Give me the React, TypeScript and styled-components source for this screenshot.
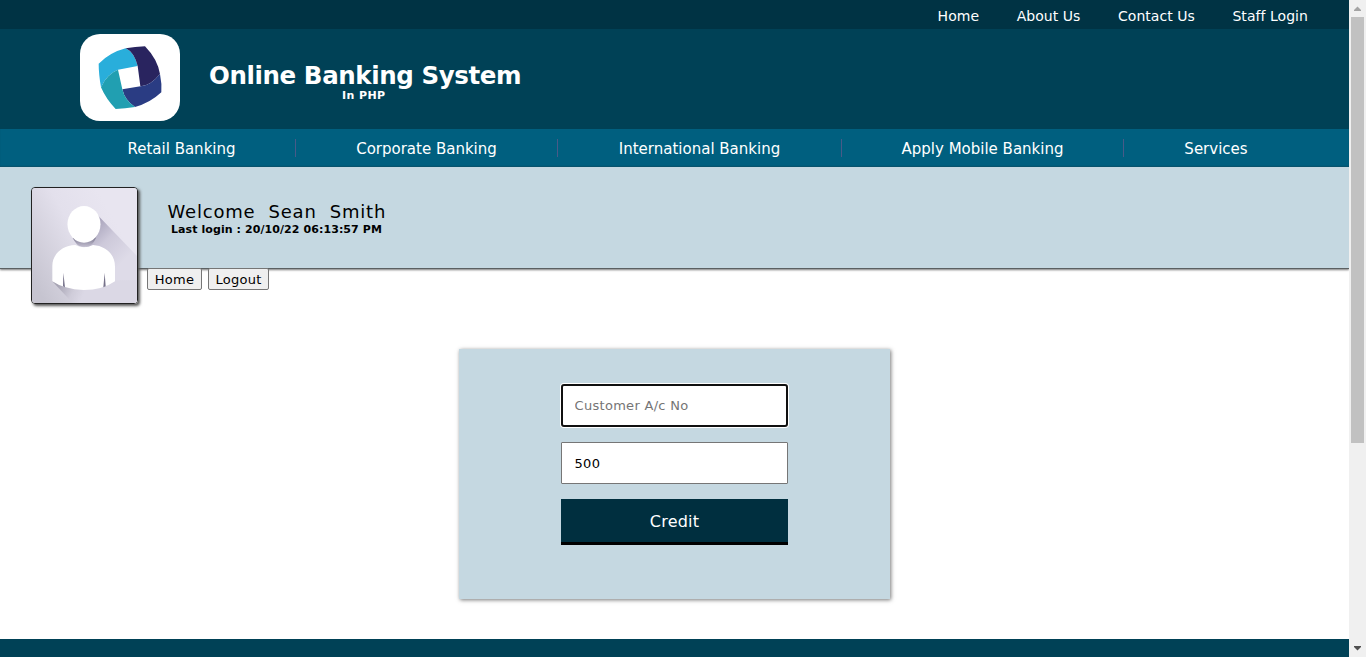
import React from 'react';
import styled, { createGlobalStyle } from 'styled-components';

const GlobalStyle = createGlobalStyle`
  * { box-sizing: border-box; }
  body { margin: 0; overflow: hidden; background: #fff; font-family: Verdana, 'DejaVu Sans', sans-serif; color: #000; }
`;

const Shell = styled.div`
  display: flex;
  height: 657px;
`;
const Page = styled.div`
  flex: 1;
  display: flex;
  flex-direction: column;
  min-width: 0;
`;
const TopBar = styled.nav`
  height: 29px;
  flex: none;
  background: #003344;
  display: flex;
  justify-content: flex-end;
  gap: 37.5px;
  padding: 2px 41px 0 0;
`;
const TopLink = styled.a`
  color: #fff;
  font-size: 14px;
  line-height: 28px;
  letter-spacing: 0.05px;
  white-space: nowrap;
`;
const Header = styled.header`
  height: 100px;
  flex: none;
  background: #004156;
  display: flex;
  padding: 5px 0 0 80px;
`;
const LogoTile = styled.div`
  width: 100px;
  height: 87px;
  border-radius: 20px;
  background: #fff;
  overflow: hidden;
`;
const Brand = styled.div`
  margin: 27px 0 0 29px;
  color: #fff;
  font-weight: bold;
`;
const BrandName = styled.div`
  font-size: 24.5px;
  line-height: 30px;
  letter-spacing: -0.4px;
  white-space: nowrap;
`;
const BrandNote = styled.div`
  font-size: 11px;
  line-height: 13px;
  letter-spacing: 0.4px;
  padding-left: 133px;
  margin-top: -2px;
`;
const MainNav = styled.nav`
  height: 38px;
  flex: none;
  background: #005f7f;
  box-shadow: inset 0 -1px 1px #00506c;
  display: flex;
  align-items: center;
  padding-left: 68px;
`;
const NavItem = styled.a<{ $width: number; $last?: boolean }>`
  width: ${(p) => p.$width}px;
  height: 18px;
  line-height: 20px;
  font-size: 15px;
  text-align: center;
  color: #fff;
  white-space: nowrap;
  border-right: ${(p) => (p.$last ? 'none' : '1px solid #485a88')};
`;
const UserBand = styled.section`
  height: 102px;
  flex: none;
  background: #c5d8e1;
  border-bottom: 1px solid #5b6062;
  box-shadow: 0 1px 2px #777;
  display: flex;
  padding: 20px 0 0 31px;
`;
const Avatar = styled.div`
  width: 107px;
  height: 117px;
  flex: none;
  border: 1px solid #222;
  border-radius: 4px;
  overflow: hidden;
  box-shadow: 2px 2px 3px #555;
  z-index: 1;
  svg { display: block; }
`;
const UserText = styled.div`
  padding: 14px 0 0 29.5px;
`;
const Welcome = styled.div`
  font-size: 18px;
  line-height: 22px;
  letter-spacing: 0.8px;
  white-space: pre;
`;
const LastLogin = styled.div`
  font-size: 11px;
  font-weight: bold;
  line-height: 13px;
  letter-spacing: 0.08px;
  padding-left: 3.5px;
`;
const Actions = styled.div`
  display: flex;
  gap: 6px;
  flex: none;
  height: 22px;
  margin: -1px 0 0 147px;
`;
const ActionButton = styled.button<{ $width: number }>`
  width: ${(p) => p.$width}px;
  height: 22px;
  padding: 1px 0 0;
  border: 1px solid #767676;
  border-radius: 2px;
  background: #efefef;
  font: 13px/20px Verdana, 'DejaVu Sans', sans-serif;
  letter-spacing: 0.25px;
  color: #000;
`;
const Card = styled.form`
  width: 431px;
  height: 250px;
  flex: none;
  margin: 59px 0 0 459px;
  padding: 35px 102px 0;
  background: #c5d8e1;
  box-shadow: 1px 1px 4px #777;
  display: flex;
  flex-direction: column;
`;
const Field = styled.input<{ $active?: boolean }>`
  width: 227px;
  height: ${(p) => (p.$active ? 43 : 42)}px;
  margin: 0 0 15px;
  padding: 0 ${(p) => (p.$active ? 11.5 : 12.5)}px;
  background: #fff;
  border: ${(p) => (p.$active ? '2px solid #101010' : '1px solid #767676')};
  border-radius: ${(p) => (p.$active ? 3 : 1)}px;
  box-shadow: ${(p) => (p.$active ? '0 0 0 1px #fff' : 'none')};
  outline: none;
  font: 13px Verdana, 'DejaVu Sans', sans-serif;
  letter-spacing: 0.3px;
  color: #000;
  &::placeholder { color: #757575; opacity: 1; }
`;
const Submit = styled.button`
  width: 227px;
  height: 46px;
  padding: 2px 0 0;
  border: 0;
  border-bottom: 3px solid #000;
  background: #002f3f;
  color: #fff;
  font: 16px Verdana, 'DejaVu Sans', sans-serif;
  letter-spacing: 0.2px;
`;
const Footer = styled.footer`
  height: 18px;
  flex: none;
  margin-top: auto;
  background: #004156;
`;
const ScrollTrack = styled.div`
  width: 17px;
  flex: none;
  background: #f0f0f0;
  display: flex;
  flex-direction: column;
  align-items: center;
`;
const ScrollThumb = styled.div`
  width: 13px;
  height: 426px;
  background: #c1c1c1;
  margin-bottom: auto;
`;
const ArrowIcon = styled.svg`
  flex: none;
`;

const Logo = () => (
  <svg width="100" height="87" viewBox="30 30 300 261">
    <path fill="#29aedb" d="M86 119Q120 85 167 73Q192 84 203 126L144 137Q110 150 93 190Q86 150 86 119Z" />
    <path fill="#29245f" d="M167 73Q195 68 225 67Q262 105 270 150Q243 183 216 186H211L203 126Q192 84 167 73Z" />
    <path fill="#2a3c83" d="M270 150Q276 180 274 205Q240 237 195 249Q165 230 157 196L216 186Q243 183 270 150Z" />
    <path fill="#219fb1" d="M93 190Q110 150 144 137L157 196Q165 230 195 249Q165 254 137 255Q108 225 93 190Z" />
  </svg>
);

const Portrait = () => (
  <svg width="105" height="115" viewBox="36 24 315 345">
    <defs>
      <linearGradient id="backdrop" x1="0" y1="0.8" x2="0.8" y2="0.3">
        <stop offset="0" stopColor="#c6c4d0" />
        <stop offset="0.6" stopColor="#e3e0ec" />
        <stop offset="1" stopColor="#e8e5f0" />
      </linearGradient>
      <linearGradient id="cast" gradientUnits="userSpaceOnUse" x1="215" y1="130" x2="320" y2="235">
        <stop offset="0" stopColor="#a5a0b9" />
        <stop offset="0.45" stopColor="#cdc9da" />
        <stop offset="1" stopColor="#dedbe8" />
      </linearGradient>
      <linearGradient id="castLow" gradientUnits="userSpaceOnUse" x1="115" y1="310" x2="190" y2="345">
        <stop offset="0" stopColor="#a6a3b3" />
        <stop offset="0.6" stopColor="#cfccd9" />
        <stop offset="1" stopColor="#dbd8e5" />
      </linearGradient>
      <linearGradient id="neck" x1="0" y1="0" x2="0" y2="1">
        <stop offset="0" stopColor="#77728b" />
        <stop offset="1" stopColor="#c4c0d1" />
      </linearGradient>
    </defs>
    <rect x="36" y="24" width="315" height="345" fill="url(#backdrop)" />
    <path d="M232 104L351 228V369H270V230L190 196Z" fill="url(#cast)" />
    <path d="M97 304L158 369H351V300Z" fill="url(#castLow)" />
    <path d="M158 174Q170 195 178 198Q192 204 210 197Q224 187 229 170Z" fill="url(#neck)" />
    <ellipse cx="192" cy="133" rx="49.5" ry="55" fill="#fff" />
    <path d="M97 304V258C97 224 124 197 166 195Q180 202 192 202Q205 202 219 195C259 198 285 224 285 260V304Q248 330 191 330Q132 328 97 304Z" fill="#fff" />
    <path d="M130 278L135 322L129 319ZM254 278L257 319L250 322Z" fill="#77738b" />
  </svg>
);

const Arrow = ({ down }: { down?: boolean }) => (
  <ArrowIcon width="17" height="17" viewBox="0 0 17 17">
    <path d={down ? 'M5 6h7v1L8.5 10.5L5 7Z' : 'M5 11h7v-1L8.5 6.5L5 10Z'} fill={down ? '#505050' : '#a3a3a3'} />
  </ArrowIcon>
);

const menu = [
  { label: 'Retail Banking', width: 228 },
  { label: 'Corporate Banking', width: 262 },
  { label: 'International Banking', width: 284 },
  { label: 'Apply Mobile Banking', width: 282 },
  { label: 'Services', width: 184 },
];

export default function App() {
  return (
    <Shell>
      <GlobalStyle />
      <Page>
        <TopBar>
          {['Home', 'About Us', 'Contact Us', 'Staff Login'].map((t) => (
            <TopLink key={t}>{t}</TopLink>
          ))}
        </TopBar>
        <Header>
          <LogoTile><Logo /></LogoTile>
          <Brand>
            <BrandName>Online Banking System</BrandName>
            <BrandNote>In PHP</BrandNote>
          </Brand>
        </Header>
        <MainNav>
          {menu.map((m, i) => (
            <NavItem key={m.label} $width={m.width} $last={i === menu.length - 1}>{m.label}</NavItem>
          ))}
        </MainNav>
        <UserBand>
          <Avatar><Portrait /></Avatar>
          <UserText>
            <Welcome>{'Welcome  Sean  Smith'}</Welcome>
            <LastLogin>Last login : 20/10/22 06:13:57 PM</LastLogin>
          </UserText>
        </UserBand>
        <Actions>
          <ActionButton $width={55}>Home</ActionButton>
          <ActionButton $width={61}>Logout</ActionButton>
        </Actions>
        <Card>
          <Field $active placeholder="Customer A/c No" />
          <Field defaultValue="500" />
          <Submit type="button">Credit</Submit>
        </Card>
        <Footer />
      </Page>
      <ScrollTrack>
        <Arrow />
        <ScrollThumb />
        <Arrow down />
      </ScrollTrack>
    </Shell>
  );
}
